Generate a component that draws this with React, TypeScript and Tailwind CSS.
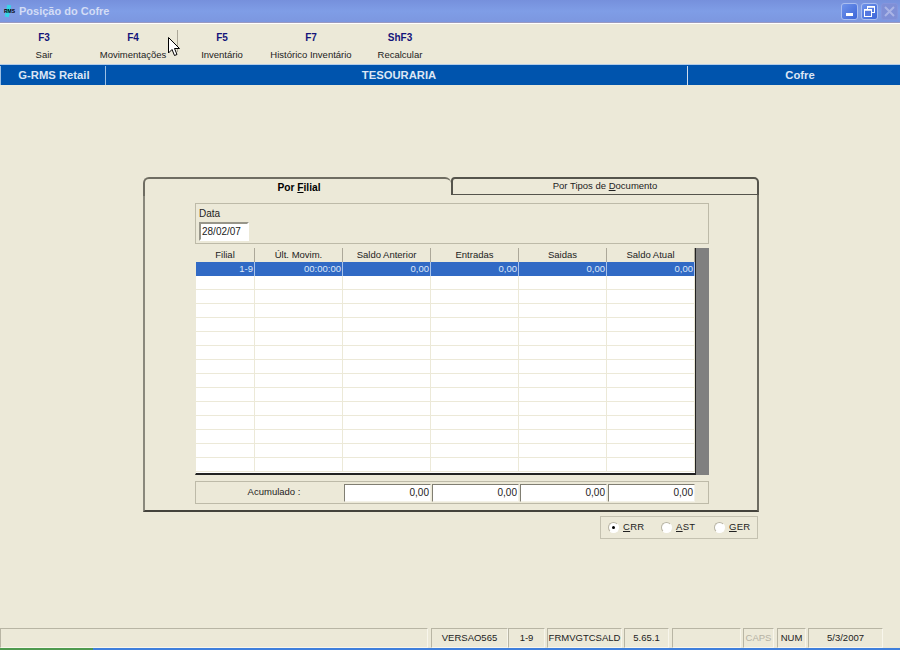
const font = { fontFamily: '"Liberation Sans", Arial, sans-serif' };

const tools = [
  ["F3", "Sair"],
  ["F4", "Movimentações"],
  ["F5", "Inventário"],
  ["F7", "Histórico Inventário"],
  ["ShF3", "Recalcular"],
];

const columns = [
  { label: "Filial", width: "w-[59px]", value: "1-9" },
  { label: "Últ. Movim.", width: "w-[88px]", value: "00:00:00" },
  { label: "Saldo Anterior", width: "w-[88px]", value: "0,00" },
  { label: "Entradas", width: "w-[88px]", value: "0,00" },
  { label: "Saidas", width: "w-[88px]", value: "0,00" },
  { label: "Saldo Atual", width: "w-[88px]", value: "0,00" },
];

const status = [
  { t: "", w: "w-[428px]", ml: "ml-0" },
  { t: "VERSAO565", w: "w-[77px]", ml: "ml-[3px]" },
  { t: "1-9", w: "w-[37px]", ml: "ml-0" },
  { t: "FRMVGTCSALD", w: "w-[75px]", ml: "ml-[2px]" },
  { t: "5.65.1", w: "w-[45px]", ml: "ml-[2px]" },
  { t: "", w: "w-[69px]", ml: "ml-[3px]" },
  { t: "CAPS", w: "w-[31px]", ml: "ml-[2px]", muted: true },
  { t: "NUM", w: "w-[29px]", ml: "ml-[3px]" },
  { t: "5/3/2007", w: "w-[75px]", ml: "ml-[2px]" },
];

function WinButton({ children, faded }: { children: React.ReactNode; faded?: boolean }) {
  return (
    <div
      className={`flex h-[17px] w-[17px] items-center justify-center rounded-[3px] border ${
        faded ? "border-[#8594dc] bg-[#7f8fd6]" : "border-[#a9bdf0] bg-gradient-to-br from-[#6f93ea] to-[#3d65d8]"
      }`}
    >
      {children}
    </div>
  );
}

function Radio({ label, rest, checked, width }: { label: string; rest: string; checked?: boolean; width: string }) {
  return (
    <div className={`flex items-center gap-[4px] ${width}`}>
      <div className="flex h-[11px] w-[11px] items-center justify-center rounded-full border border-[#b8b4a4] border-b-white border-r-white bg-white">
        {checked && <div className="h-[3px] w-[3px] rounded-full bg-black" />}
      </div>
      <span className="text-[9.5px] tracking-[0.3px] text-[#222]">
        <span className="underline">{label}</span>
        {rest}
      </span>
    </div>
  );
}

export default function App() {
  return (
    <div style={font} className="relative flex h-[650px] w-[900px] flex-col overflow-hidden bg-[#ece9d8] text-[9.5px] text-[#222]">
      {/* Title bar */}
      <div className="flex h-[22px] items-center bg-gradient-to-b from-[#7690dc] via-[#7f9de6] to-[#7c97e0] pl-[2px] pr-[2px]">
        <div className="relative flex h-[12px] w-[15px] items-center justify-center">
          <div className="absolute left-[4px] top-0 h-[12px] w-[4px] rotate-12 bg-[#35d6e8]" />
          <span className="relative text-[5px] font-bold leading-none text-black">RMS</span>
        </div>
        <span className="ml-[2px] text-[11px] font-bold text-[#d3dcf5]">Posição do Cofre</span>
        <div className="ml-auto flex gap-[3px]">
          <WinButton>
            <div className="mt-[7px] h-[3px] w-[7px] bg-white" />
          </WinButton>
          <WinButton>
            <svg width="11" height="11" viewBox="0 0 11 11" fill="none" stroke="white">
              <rect x="3.5" y="0.5" width="7" height="6" strokeWidth="1" />
              <rect x="0.5" y="3.5" width="7" height="7" fill="#5478e0" strokeWidth="1" />
              <path d="M0 4h8M3 1h8" strokeWidth="1.5" />
            </svg>
          </WinButton>
          <WinButton faded>
            <svg width="11" height="11" viewBox="0 0 11 11" stroke="#aab4e6" strokeWidth="2">
              <path d="M1 1l9 9M10 1l-9 9" />
            </svg>
          </WinButton>
        </div>
      </div>
      <div className="h-px bg-[#9a9ac0]" />
      <div className="h-px bg-white" />

      {/* Toolbar */}
      <div className="relative flex h-[40px] items-start pt-[7px]">
        {tools.map(([key, label]) => (
          <div key={key} className="flex w-[89px] flex-col items-center pr-px">
            <span className="text-[10px] font-bold leading-[14px] text-[#14147a]">{key}</span>
            <span className="mt-[3px] whitespace-nowrap text-[9.5px] leading-[14px] text-[#222]">{label}</span>
          </div>
        ))}
        <div className="absolute left-[177px] top-[6px] h-[22px] w-px bg-[#aca899]" />
        <svg className="absolute left-[168px] top-[13px]" width="12" height="20" viewBox="0 0 12 20">
          <path d="M0.5 0.5V16L4 12.5L6.5 18.5L9 17.5L6.5 11.5H11.5Z" fill="white" stroke="black" strokeWidth="1" />
        </svg>
      </div>

      {/* Blue header */}
      <div className="flex h-[21px] items-center border-t border-white/70 bg-[#0054ad] pt-[1px] text-[11.25px] font-bold text-[#dce6f4]">
        <div className="flex h-full w-[106px] items-center justify-center border-r border-l border-[#9cc0e4] pl-[2px]">G-RMS Retail</div>
        <div className="flex h-full w-[581px] items-center justify-center pl-[5px]">TESOURARIA</div>
        <div className="flex h-full flex-1 items-center justify-center border-l border-[#d0dcec] pl-[12px]">Cofre</div>
      </div>

      {/* Main */}
      <div className="flex-1 pl-[143px] pt-[92px]">
        <div className="w-[616px]">
          {/* Tabs */}
          <div className="relative z-10 flex h-[18px] items-stretch">
            <div className="relative -mb-px flex w-[308px] items-center justify-center rounded-t-[6px] border-l-2 border-t-2 border-[#6f6d62] bg-[#ece9d8] pl-[2px] text-[10.2px] font-bold text-black">
              <span>
                Por <span className="underline">F</span>ilial
              </span>
            </div>
            <div className="flex flex-1 items-center justify-center rounded-tl-[4px] rounded-tr-[5px] border-b border-l-2 border-r-2 border-t-2 border-[#55544c] bg-[#ece9d8]">
              <span>
                Por Tipos de <span className="underline">D</span>ocumento
              </span>
            </div>
          </div>

          {/* Panel */}
          <div className="h-[317px] border-b-2 border-l-2 border-r-2 border-b-[#44433c] border-l-[#8a887c] border-r-[#6f6d62] pl-[50px] pt-[8px]">
            {/* Data */}
            <div className="h-[41px] w-[514px] border border-[#bdbaa8] pl-[3px] pt-[4px]">
              <div className="text-[10px] leading-[12px]">Data</div>
              <div className="mt-[2px] flex h-[19px] w-[50px] items-center border-2 border-b-white border-l-[#98968a] border-r-white border-t-[#98968a] bg-white pl-px text-[10px]">
                28/02/07
              </div>
            </div>

            {/* Grid */}
            <div className="mt-[4px] flex h-[227px] w-[514px] bg-[#808080]">
              <div className="flex h-full w-[501px] flex-col overflow-hidden border-b-2 border-l border-r border-b-[#222] border-l-[#ece9d8] border-r-[#222] bg-white">
                <div className="flex h-[14px] flex-none bg-[#ece9d8]">
                  {columns.map((c) => (
                    <div key={c.label} className={`${c.width} flex flex-none items-center justify-center border-r border-[#aca899] leading-none`}>
                      {c.label}
                    </div>
                  ))}
                </div>
                <div className="flex h-[14px] flex-none bg-[#316ac5] text-[#dfe8f8]">
                  {columns.map((c) => (
                    <div key={c.label} className={`${c.width} flex flex-none items-center justify-end border-r border-[#a9c3ea] pr-px leading-none`}>
                      {c.value}
                    </div>
                  ))}
                </div>
                {Array.from({ length: 14 }).map((_, i) => (
                  <div key={i} className="flex h-[14px] flex-none border-b border-[#ece9d8]">
                    {columns.map((c) => (
                      <div key={c.label} className={`${c.width} flex-none border-r border-[#ece9d8]`} />
                    ))}
                  </div>
                ))}
              </div>
            </div>

            {/* Acumulado */}
            <div className="mt-[6px] flex h-[23px] w-[514px] items-center border border-[#bdbaa8]">
              <div className="w-[148px] pl-[8px] text-center">Acumulado :</div>
              <div className="flex gap-px">
                {[0, 1, 2, 3].map((i) => (
                  <div key={i} className="flex h-[18px] w-[87px] items-center justify-end border border-b-[#f4f2e8] border-l-[#807e72] border-r-[#f4f2e8] border-t-[#807e72] bg-white pr-px text-[10px]">
                    0,00
                  </div>
                ))}
              </div>
            </div>
          </div>

          {/* Radios */}
          <div className="ml-[457px] mt-[4px] flex h-[23px] w-[158px] items-center border border-[#c4c1b0] pl-[7px]">
            <Radio label="C" rest="RR" checked width="w-[53px]" />
            <Radio label="A" rest="ST" width="w-[53px]" />
            <Radio label="G" rest="ER" width="w-[40px]" />
          </div>
        </div>
      </div>

      {/* Status bar */}
      <div className="flex h-[20px] flex-none items-stretch">
        {status.map((s, i) => (
          <div
            key={i}
            className={`${s.w} ${s.ml} flex flex-none items-center justify-center whitespace-nowrap border border-b-[#f8f6ec] border-l-[#b8b5a4] border-r-[#f8f6ec] border-t-[#b8b5a4] text-[9.5px] ${
              s.muted ? "text-[#b5b2a4]" : "text-[#222]"
            }`}
          >
            {s.t}
          </div>
        ))}
      </div>

      {/* Taskbar sliver */}
      <div className="flex h-[2px] flex-none">
        <div className="w-[93px] bg-[#4f9a4f]" />
        <div className="flex-1 bg-[#3f7fdc]" />
      </div>
    </div>
  );
}
